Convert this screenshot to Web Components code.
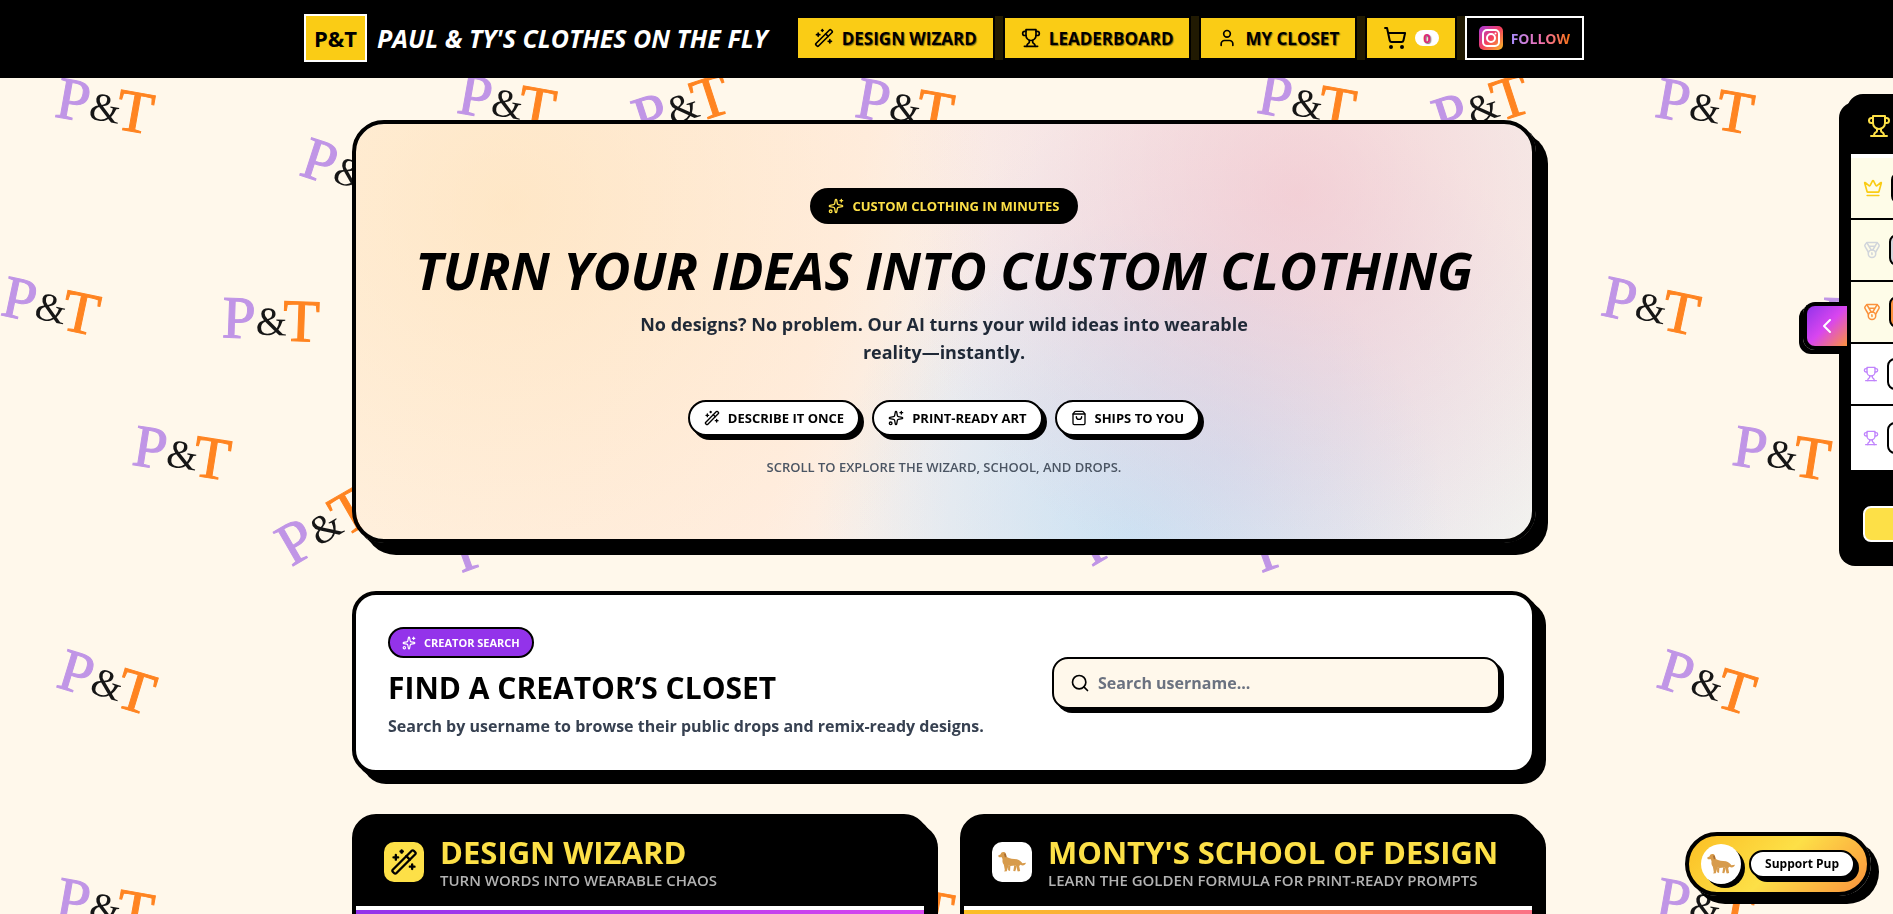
<!DOCTYPE html>
<html lang="en">
<head>
<meta charset="utf-8">
<meta name="viewport" content="width=device-width, initial-scale=1">
<title>Paul &amp; Ty's Clothes On The Fly</title>
<style>
html {
    scrollbar-width: none;
    overflow-x: hidden;
}
body {
    margin: 0;
    padding: 78px 5px 0 0;
    background: #fff8eb;
    color: #000;
    font-family: "Open Sans", "Noto Sans", sans-serif;
    font-size: 16px;
    font-weight: 700;
}
main {
    position: relative;
    max-width: 1184px;
    margin: 0 auto;
    padding: 42px 48px 80px;
}
.features {
    display: grid;
    grid-template-columns: 1fr 1fr;
    gap: 32px;
    margin-top: 40px;
}
@media (max-width: 900px) {
    .features {
        grid-template-columns: 1fr;
    }
}
</style>
</head>
<body>
<pt-backdrop></pt-backdrop>

<pt-header>
  <pt-nav-button icon="wand">DESIGN WIZARD</pt-nav-button>
  <pt-nav-button icon="trophy">LEADERBOARD</pt-nav-button>
  <pt-nav-button icon="user">MY CLOSET</pt-nav-button>
  <pt-cart-button count="0"></pt-cart-button>
  <pt-follow-link>FOLLOW</pt-follow-link>
</pt-header>

<main>
  <pt-hero>
    <pt-badge slot="badge" icon="sparkles">CUSTOM CLOTHING IN MINUTES</pt-badge>
    <span slot="title">TURN YOUR IDEAS INTO CUSTOM CLOTHING</span>
    <span slot="lead">No designs? No problem. Our AI turns your wild ideas into wearable reality—instantly.</span>
    <pt-pill icon="wand">DESCRIBE IT ONCE</pt-pill>
    <pt-pill icon="sparkles">PRINT-READY ART</pt-pill>
    <pt-pill icon="bag">SHIPS TO YOU</pt-pill>
    <span slot="hint">SCROLL TO EXPLORE THE WIZARD, SCHOOL, AND DROPS.</span>
  </pt-hero>

  <pt-creator-search>
    <pt-badge slot="badge" icon="sparkles" small>CREATOR SEARCH</pt-badge>
    <span slot="title">FIND A CREATOR’S CLOSET</span>
    <span slot="text">Search by username to browse their public drops and remix-ready designs.</span>
  </pt-creator-search>

  <div class="features">
    <pt-feature icon="wand" tone="wizard">
      DESIGN WIZARD
      <span slot="sub">TURN WORDS INTO WEARABLE CHAOS</span>
    </pt-feature>
    <pt-feature icon="dog" tone="school">
      MONTY'S SCHOOL OF DESIGN
      <span slot="sub">LEARN THE GOLDEN FORMULA FOR PRINT-READY PROMPTS</span>
    </pt-feature>
  </div>
</main>

<pt-leaderboard></pt-leaderboard>
<pt-support>Support Pup</pt-support>

<script>
const icons = {
    wand: '<path d="m21.64 3.64-1.28-1.28a1.21 1.21 0 0 0-1.72 0L2.36 18.64a1.21 1.21 0 0 0 0 1.72l1.28 1.28a1.2 1.2 0 0 0 1.72 0L21.64 5.36a1.2 1.2 0 0 0 0-1.72"/><path d="m14 7 3 3M5 6v4M19 14v4M10 2v2M7 8H3M21 16h-4M11 3H9"/>',
    trophy: '<path d="M6 9H4.5a2.5 2.5 0 0 1 0-5H6M18 9h1.5a2.5 2.5 0 0 0 0-5H18M4 22h16"/><path d="M10 14.66V17c0 .55-.47.98-.97 1.21C7.85 18.75 7 20.24 7 22M14 14.66V17c0 .55.47.98.97 1.21C16.15 18.75 17 20.24 17 22"/><path d="M18 2H6v7a6 6 0 0 0 12 0V2Z"/>',
    user: '<path d="M19 21v-2a4 4 0 0 0-4-4H9a4 4 0 0 0-4 4v2"/><circle cx="12" cy="7" r="4"/>',
    cart: '<circle cx="8" cy="21" r="1" fill="currentColor"/><circle cx="19" cy="21" r="1" fill="currentColor"/><path d="M2.05 2.05h2l2.66 12.42a2 2 0 0 0 2 1.58h9.78a2 2 0 0 0 1.95-1.57l1.65-7.43H5.12"/>',
    sparkles: '<path d="M11.017 2.814a1 1 0 0 1 1.966 0l1.051 5.558a2 2 0 0 0 1.594 1.594l5.558 1.051a1 1 0 0 1 0 1.966l-5.558 1.051a2 2 0 0 0-1.594 1.594l-1.051 5.558a1 1 0 0 1-1.966 0l-1.051-5.558a2 2 0 0 0-1.594-1.594l-5.558-1.051a1 1 0 0 1 0-1.966l5.558-1.051a2 2 0 0 0 1.594-1.594z"/><path d="M20 2v4M22 4h-4"/><circle cx="4" cy="20" r="2"/>',
    bag: '<path d="M16 10a4 4 0 0 1-8 0M3.103 6.034h17.794"/><path d="M3.4 5.467a2 2 0 0 0-.4 1.2V20a2 2 0 0 0 2 2h14a2 2 0 0 0 2-2V6.667a2 2 0 0 0-.4-1.2l-2-2.667A2 2 0 0 0 17 2H7a2 2 0 0 0-1.6.8z"/>',
    search: '<path d="m21 21-4.34-4.34"/><circle cx="11" cy="11" r="8"/>',
    crown: '<path d="M11.562 3.266a.5.5 0 0 1 .876 0L15.39 8.87a1 1 0 0 0 1.516.294L21.183 5.5a.5.5 0 0 1 .798.519l-2.834 10.246a1 1 0 0 1-.956.734H5.81a1 1 0 0 1-.957-.734L2.02 6.02a.5.5 0 0 1 .798-.519l4.276 3.664a1 1 0 0 0 1.516-.294z"/><path d="M5 21h14"/>',
    medal: '<path d="M7.21 15 2.66 7.14a2 2 0 0 1 .13-2.2L4.4 2.8A2 2 0 0 1 6 2h12a2 2 0 0 1 1.6.8l1.6 2.14a2 2 0 0 1 .14 2.2L16.79 15"/><path d="M11 12 5.12 2.2M13 12l5.88-9.8M8 7h8"/><circle cx="12" cy="17" r="5"/><path d="M12 18v-2h-.5"/>',
    chevron: '<path d="m15 18-6-6 6-6"/>',
    dog: '<g transform="translate(0 3.5) scale(.279)" fill="#d79b4c" stroke="none"><path d="M0 11 8 7 10 2C14-1 21-1 24 4L27 15C35 21 48 20 58 22 67 24 71 30 75 34L86 33C83 41 76 44 69 39L65 43 68 58 61 60 59 56 58 45 53 41C45 42 38 43 32 42L27 59 19 60 21 55 18 39C14 35 13 29 14 23L12 16 3 16Z"/><path d="M50 40 47 58 53 59 58 44M31 42 31 56 37 58 38 42"/><path d="M18 4 24 5 26 15 21 16Z" fill="#a96d31"/></g>'
};

/** Builds a template from the styles and the markup of one element. */
function makeTemplate(css, html) {
    const template = document.createElement("template");
    template.innerHTML = `<style>${css}</style>${html}`;
    return template;
}

class PtElement extends HTMLElement {

    connectedCallback() {
        if (this.shadowRoot) {
            return;
        }
        this.attachShadow({mode: "open"});
        this.shadowRoot.appendChild(this.constructor.template.content.cloneNode(true));
        this.init();
    }

    init() {
        // hand the icon name of the host on to the icon in its shadow root
        const icon = this.shadowRoot.querySelector("pt-icon:not([name])");
        if (icon) {
            icon.setAttribute("name", this.getAttribute("icon"));
        }
    }
}

class PtIcon extends HTMLElement {

    static get observedAttributes() {
        return ["name"];
    }

    constructor() {
        super();
        this.attachShadow({mode: "open"});
    }

    connectedCallback() {
        this.render();
    }

    attributeChangedCallback() {
        this.render();
    }

    render() {
        this.shadowRoot.innerHTML = `
<style>
:host { display: block; flex: none; width: 20px; height: 20px; }
svg { display: block; width: 100%; height: 100%; overflow: visible; }
</style>
<svg viewBox="0 0 24 24" fill="none" stroke="currentColor" stroke-width="2" stroke-linecap="round" stroke-linejoin="round" aria-hidden="true">${icons[this.getAttribute("name")] || ""}</svg>`;
    }
}

/* The monograms scattered behind the page, repeated every 800px. */
class PtBackdrop extends PtElement {

    static template = makeTemplate(`
:host {
    position: fixed;
    inset: 0;
    overflow: hidden;
}
svg {
    display: block;
    width: 100%;
    height: 100%;
    font-family: "Liberation Serif", serif;
    font-weight: 400;
}
text { stroke-width: 1px; }
.p { fill: #c095e6; stroke: #c095e6; font-size: 60px; }
.and { fill: #161616; font-size: 40px; }
.t { fill: #ff8421; stroke: #ff8421; font-size: 60px; }
`, `<svg aria-hidden="true"></svg>`);

    init() {
        const marks = [
            [103, 107, 10], [348, 172, 18], [49, 307, 12], [269, 321, 2],
            [180, 454, 9], [323, 528, -30], [105, 683, 17], [505, 103, 10],
            [680, 108, -18], [499, 540, -20]
        ];
        let html = "";
        for (let ty = 0; ty <= innerHeight; ty += 800) {
            for (let tx = 0; tx <= innerWidth; tx += 800) {
                for (const [x, y, turn] of marks) {
                    if (x + tx > innerWidth + 60 || y + ty > innerHeight + 60) {
                        continue;
                    }
                    html += `<g transform="translate(${x + tx} ${y + ty}) rotate(${turn})"><text class="p" x="-47" y="18">P</text><text class="and" x="-13" y="14">&amp;</text><text class="t" x="14" y="19">T</text></g>`;
                }
            }
        }
        this.shadowRoot.querySelector("svg").innerHTML = html;
    }
}

class PtHeader extends PtElement {

    static template = makeTemplate(`
:host {
    position: fixed;
    z-index: 5;
    top: 0;
    left: 0;
    right: 0;
    padding-right: 5px;
    background: #000;
}
.bar {
    display: flex;
    align-items: center;
    justify-content: space-between;
    gap: 24px;
    max-width: 1280px;
    height: 78px;
    margin: 0 auto;
    box-sizing: border-box;
    padding-bottom: 2px;
}
.brand {
    display: flex;
    align-items: center;
    gap: 10px;
    color: #fff;
    font-size: 25px;
    font-style: italic;
    text-decoration: none;
    white-space: nowrap;
}
.mark {
    padding: 0 8px;
    border: 2px solid #fff;
    background: #facc15;
    color: #000;
    font-size: 22px;
    font-style: normal;
    line-height: 44px;
}
nav {
    display: flex;
    gap: 8px;
}
`, `
<header class="bar">
  <a class="brand" href="#"><span class="mark">P&amp;T</span><span>PAUL &amp; TY'S CLOTHES ON THE FLY</span></a>
  <nav><slot></slot></nav>
</header>
`);
}

const navStyle = `
:host {
    display: block;
}
button {
    display: flex;
    align-items: center;
    gap: 8px;
    height: 44px;
    padding: 0 16px;
    border: 2px solid #000;
    background: #facc15;
    box-shadow: 8px 0 #211a02;
    color: #000;
    font: inherit;
    font-size: 17px;
    text-shadow: 1px 1px 1px rgba(0, 0, 0, 0.5);
    white-space: nowrap;
    cursor: pointer;
}
`;

class PtNavButton extends PtElement {

    static template = makeTemplate(navStyle, `<button><pt-icon></pt-icon><slot></slot></button>`);
}

class PtCartButton extends PtElement {

    static template = makeTemplate(navStyle + `
pt-icon {
    width: 24px;
    height: 24px;
}
.count {
    padding: 0 8px;
    border-radius: 8px;
    background: #fff;
    color: #db2777;
    font-size: 13px;
    line-height: 16px;
}
`, `<button aria-label="Cart"><pt-icon name="cart"></pt-icon><span class="count"></span></button>`);

    init() {
        this.shadowRoot.querySelector(".count").textContent = this.getAttribute("count");
    }
}

class PtFollowLink extends PtElement {

    static template = makeTemplate(`
:host {
    display: block;
}
a {
    display: flex;
    align-items: center;
    gap: 8px;
    height: 40px;
    padding: 0 12px;
    border: 2px solid #fff;
    font-size: 14px;
    text-decoration: none;
}
svg {
    width: 24px;
    height: 24px;
}
.label {
    background: linear-gradient(90deg, #a78bfa, #f472b6 50%, #f97316);
    background-clip: text;
    color: transparent;
}
`, `
<a href="#">
  <svg viewBox="0 0 24 24" fill="none" stroke="#fff" stroke-width="2" aria-hidden="true">
    <defs><linearGradient id="ig" x1="0" y1="0" x2="1" y2="1"><stop stop-color="#a83adf"/><stop offset=".5" stop-color="#f43f5e"/><stop offset="1" stop-color="#fbbf24"/></linearGradient></defs>
    <rect width="24" height="24" rx="5" fill="url(#ig)" stroke="none"/>
    <rect x="4" y="4" width="16" height="16" rx="4"/>
    <circle cx="12" cy="12" r="4"/>
    <circle cx="16.500" cy="7.500" r="1" fill="#fff" stroke="none"/>
  </svg>
  <span class="label"><slot></slot></span>
</a>
`);
}

class PtBadge extends PtElement {

    static template = makeTemplate(`
:host {
    display: flex;
    align-items: center;
    gap: 8px;
    width: fit-content;
    padding: 8px 18px;
    border-radius: 18px;
    background: #000;
    color: #fde047;
    font-size: 13px;
    line-height: 20px;
}
:host([small]) {
    padding: 6px 12px;
    border: 2px solid #000;
    background: #9333ea;
    color: #fff;
    font-size: 11px;
    line-height: 15px;
}
pt-icon {
    width: 16px;
    height: 16px;
}
:host([small]) pt-icon {
    width: 14px;
    height: 14px;
}
`, `<pt-icon></pt-icon><slot></slot>`);
}

class PtPill extends PtElement {

    static template = makeTemplate(`
:host {
    display: flex;
    align-items: center;
    gap: 8px;
    padding: 8px 14px;
    border: 2px solid #000;
    border-radius: 18px;
    background: #fff;
    box-shadow: 4px 4px #000;
    font-size: 13px;
    line-height: 16px;
}
pt-icon {
    width: 16px;
    height: 16px;
}
`, `<pt-icon></pt-icon><slot></slot>`);
}

class PtHero extends PtElement {

    static template = makeTemplate(`
:host {
    display: flex;
    flex-direction: column;
    align-items: center;
    padding: 64px 48px;
    border: 4px solid #000;
    border-radius: 32px;
    background:
        radial-gradient(circle at 13% 20%, rgba(254, 220, 170, 0.5), transparent 45%),
        radial-gradient(circle at 80% 17%, rgba(244, 178, 190, 0.5), transparent 40%),
        radial-gradient(circle at 66% 100%, rgba(176, 222, 248, 0.5), transparent 36%),
        radial-gradient(circle at 74% 80%, rgba(196, 200, 240, 0.4), transparent 40%),
        linear-gradient(105deg, #fff3e4, #ffeee2 40%, #f7f1ee 54%, #f5f4ee);
    background-clip: padding-box;
    box-shadow: 4px 4px #000, 12px 12px #000;
    text-align: center;
}
h1 {
    margin: 18px 0 12px;
    font-size: 52px;
    font-style: italic;
    font-weight: 700;
    line-height: 56px;
}
.lead {
    max-width: 640px;
    margin: 0 0 34px;
    color: #1f2937;
    font-size: 18px;
    line-height: 28px;
}
.pills {
    display: flex;
    flex-wrap: wrap;
    justify-content: center;
    gap: 12px;
}
.hint {
    margin: 23px 0 0;
    color: #4b5563;
    font-size: 13px;
    font-weight: 600;
    line-height: 16px;
}
`, `
<slot name="badge"></slot>
<h1><slot name="title"></slot></h1>
<p class="lead"><slot name="lead"></slot></p>
<div class="pills"><slot></slot></div>
<p class="hint"><slot name="hint"></slot></p>
`);
}

class PtCreatorSearch extends PtElement {

    static template = makeTemplate(`
:host {
    display: flex;
    flex-wrap: wrap;
    align-items: center;
    justify-content: space-between;
    gap: 24px;
    margin-top: 48px;
    padding: 32px;
    border: 4px solid #000;
    border-radius: 24px;
    background: #fff;
    background-clip: padding-box;
    box-shadow: 4px 4px #000, 10px 10px #000;
}
h2 {
    margin: 12px 0 8px;
    font-size: 30px;
    font-weight: 700;
    line-height: 36px;
}
p {
    margin: 0;
    color: #374151;
    line-height: 24px;
}
label {
    display: flex;
    flex: 0 1 448px;
    align-items: center;
    gap: 8px;
    box-sizing: border-box;
    height: 52px;
    padding: 0 16px;
    border: 2px solid #000;
    border-radius: 16px;
    background: #fff8eb;
    box-shadow: 4px 4px #000;
}
input {
    flex: 1;
    min-width: 0;
    padding: 0;
    border: none;
    outline: none;
    background: none;
    font: inherit;
}
input::placeholder {
    color: #6b7280;
}
`, `
<div>
  <slot name="badge"></slot>
  <h2><slot name="title"></slot></h2>
  <p><slot name="text"></slot></p>
</div>
<label for="username"><pt-icon name="search"></pt-icon><input id="username" type="text" placeholder="Search username..." aria-label="Search username"></label>
`);
}

class PtFeature extends PtElement {

    static template = makeTemplate(`
:host {
    display: block;
    overflow: hidden;
    border: 4px solid #000;
    border-radius: 24px;
    background: #000;
    box-shadow: 4px 4px #000, 10px 10px #000;
}
header {
    display: flex;
    align-items: center;
    gap: 16px;
    padding: 16px 28px;
    border-bottom: 4px solid #fff;
}
pt-icon {
    box-sizing: border-box;
    width: 40px;
    height: 40px;
    padding: 6px;
    border-radius: 10px;
    background: #fde047;
}
:host([tone="school"]) pt-icon {
    background: #fff;
}
h2 {
    margin: 0;
    color: #fde047;
    font-size: 31px;
    font-weight: 700;
    line-height: 36px;
}
p {
    margin: 0;
    color: #b3b3b3;
    font-size: 15px;
    font-weight: 600;
    line-height: 20px;
}
.body {
    height: 320px;
    background: linear-gradient(90deg, #9333ea, #d946ef);
}
:host([tone="school"]) .body {
    background: linear-gradient(90deg, #fbbf24, #fb7185);
}
`, `
<header>
  <pt-icon></pt-icon>
  <div><h2><slot></slot></h2><p><slot name="sub"></slot></p></div>
</header>
<div class="body"></div>
`);
}

class PtLeaderboard extends PtElement {

    static template = makeTemplate(`
:host {
    position: fixed;
    z-index: 4;
    top: 94px;
    right: -274px;
    width: 320px;
}
.panel {
    overflow: hidden;
    border: 4px solid #000;
    border-radius: 16px;
    background: #000;
    box-shadow: -8px 8px #000;
}
header {
    padding: 16px;
    border-bottom: 4px solid #fff;
    color: #fde047;
}
header pt-icon {
    width: 24px;
    height: 24px;
}
ol {
    margin: 0;
    padding: 0;
    list-style: none;
}
li {
    display: flex;
    align-items: center;
    gap: 8px;
    height: 60px;
    padding: 0 12px;
    border-bottom: 2px solid #000;
    background: #fff;
    color: #c084fc;
}
li:nth-child(-n+3) {
    background: #fefce8;
}
li:last-child {
    height: 64px;
    border: none;
}
li pt-icon {
    width: 16px;
    height: 16px;
}
li:nth-child(1) { color: #facc15; }
li:nth-child(2) { color: #d1d5db; }
li:nth-child(3) { color: #fb923c; }
li:nth-child(1) pt-icon {
    width: 20px;
    height: 20px;
}
li:nth-child(2) pt-icon,
li:nth-child(3) pt-icon {
    width: 18px;
    height: 18px;
}
.rank {
    width: 40px;
    height: 28px;
    border: 2px solid #000;
    border-radius: 8px;
    background: #fff;
}
li:nth-child(1) .rank { background: #000; }
li:nth-child(2) .rank { background: #d1d5db; }
li:nth-child(3) .rank { background: #fb923c; }
.more {
    display: block;
    width: 288px;
    height: 36px;
    margin: 36px 12px 12px;
    border: 2px solid #fff;
    border-radius: 8px;
    background: #fde047;
}
.tab {
    position: absolute;
    top: 208px;
    left: -44px;
    width: 44px;
    height: 48px;
    padding: 0 8px;
    border: 4px solid #000;
    border-right: none;
    border-radius: 12px 0 0 12px;
    background: linear-gradient(135deg, #9333ea, #d946ef 50%, #fb923c);
    box-shadow: -4px 4px #000;
    color: #fff;
    cursor: pointer;
}
.tab pt-icon {
    width: 24px;
    height: 24px;
}
`, `
<div class="panel">
  <header><pt-icon name="trophy"></pt-icon></header>
  <ol></ol>
  <button class="more" aria-label="Open leaderboard"></button>
</div>
<button class="tab" aria-label="Show leaderboard"><pt-icon name="chevron"></pt-icon></button>
`);

    init() {
        const ranks = ["crown", "medal", "medal", "trophy", "trophy"];
        this.shadowRoot.querySelector("ol").innerHTML = ranks
            .map(name => `<li><pt-icon name="${name}"></pt-icon><span class="rank"></span></li>`)
            .join("");
    }
}

class PtSupport extends PtElement {

    static template = makeTemplate(`
:host {
    position: fixed;
    z-index: 4;
    right: 22px;
    bottom: 18px;
}
button {
    display: flex;
    align-items: center;
    gap: 8px;
    height: 64px;
    padding: 0 12px;
    border: 4px solid #000;
    border-radius: 32px;
    background: linear-gradient(135deg, #fbbf24, #fde047 50%, #fb923c);
    box-shadow: 8px 8px #000;
    color: #000;
    font: inherit;
    cursor: pointer;
}
pt-icon {
    box-sizing: border-box;
    width: 40px;
    height: 40px;
    padding: 6px;
    border-radius: 50%;
    background: #fff;
    box-shadow: 4px 4px #000;
}
.label {
    padding: 0 14px;
    border: 2px solid #000;
    border-radius: 14px;
    background: #fff;
    box-shadow: 4px 4px #000;
    font-size: 12px;
    line-height: 24px;
}
`, `<button><pt-icon name="dog"></pt-icon><span class="label"><slot></slot></span></button>`);
}

customElements.define("pt-icon", PtIcon);
customElements.define("pt-backdrop", PtBackdrop);
customElements.define("pt-header", PtHeader);
customElements.define("pt-nav-button", PtNavButton);
customElements.define("pt-cart-button", PtCartButton);
customElements.define("pt-follow-link", PtFollowLink);
customElements.define("pt-badge", PtBadge);
customElements.define("pt-pill", PtPill);
customElements.define("pt-hero", PtHero);
customElements.define("pt-creator-search", PtCreatorSearch);
customElements.define("pt-feature", PtFeature);
customElements.define("pt-leaderboard", PtLeaderboard);
customElements.define("pt-support", PtSupport);
</script>
</body>
</html>
